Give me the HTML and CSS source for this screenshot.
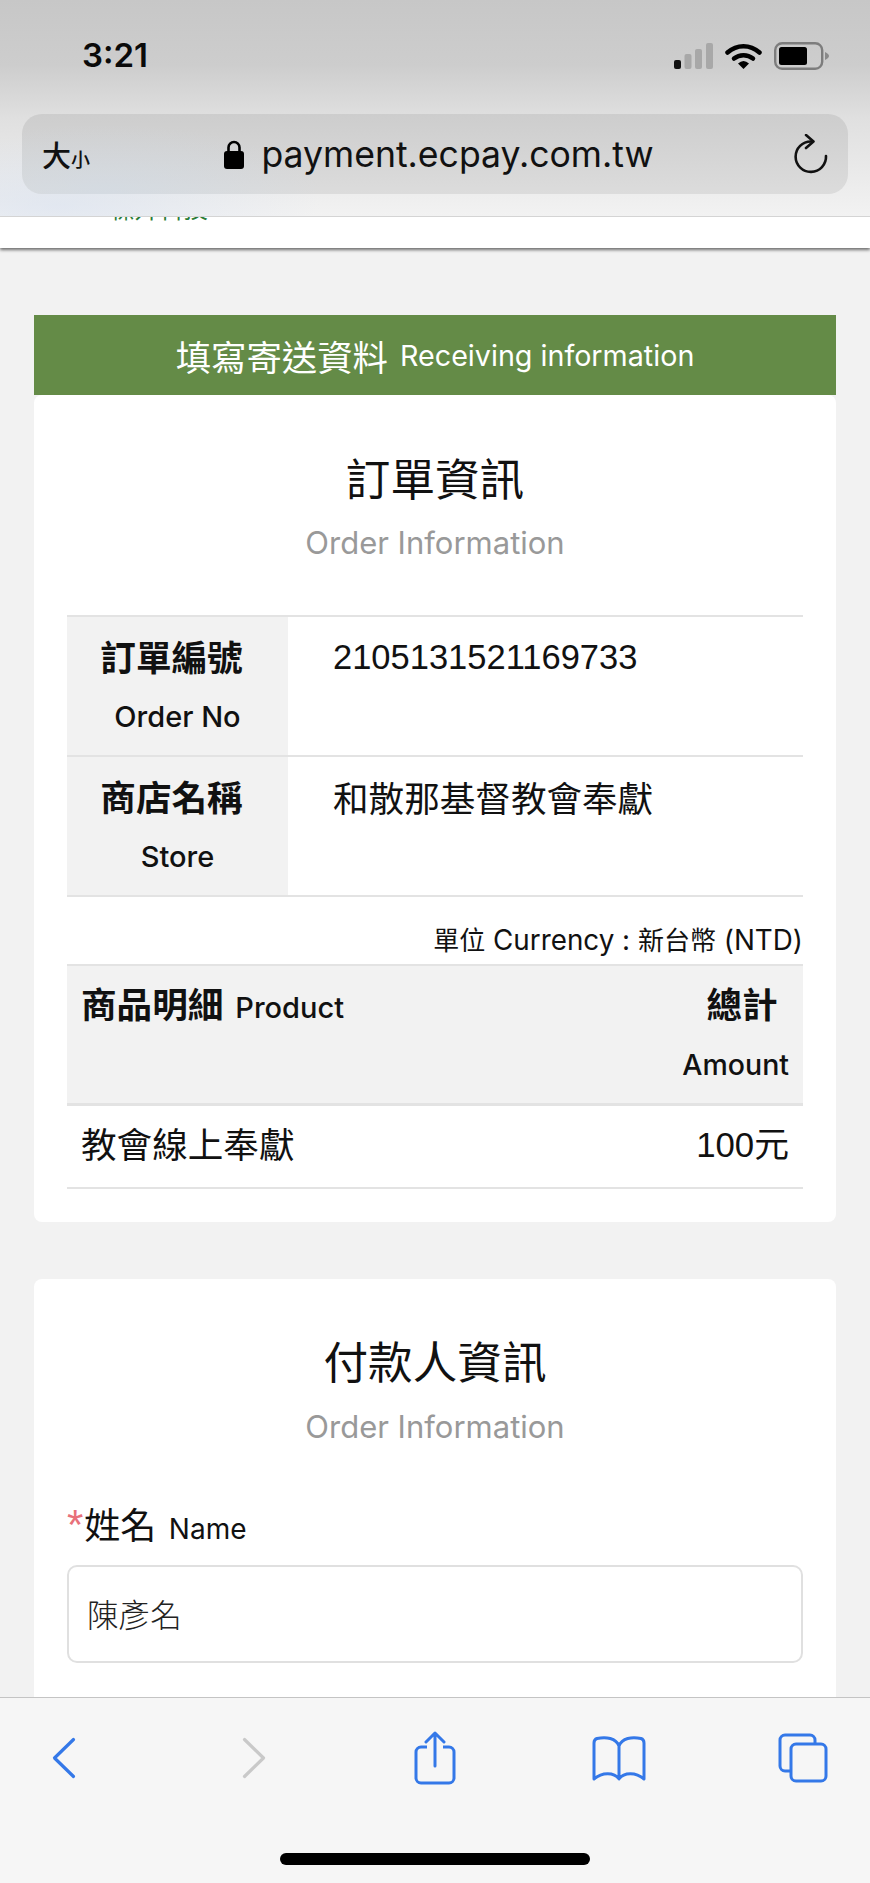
FILE: index.html
```html
<!DOCTYPE html>
<html lang="zh-Hant">
<head>
<meta charset="utf-8">
<title>填寫寄送資料</title>
<link rel="stylesheet" href="styles.css">
</head>
<body>
<div class="phone">
  <header class="chrome">
    <div class="status">
      <span class="time">3:21</span>
      <div class="status-icons">
        <svg class="signal" width="39" height="26" viewBox="0 0 39 26"><rect x="0" y="17" width="7" height="9" rx="2" fill="#111"/><rect x="10.500" y="11" width="7" height="15" rx="2" fill="#a8a8a8"/><rect x="21" y="6" width="7" height="20" rx="2" fill="#a8a8a8"/><rect x="32" y="0" width="7" height="26" rx="2" fill="#a8a8a8"/></svg>
        <svg class="wifi" width="37" height="26" viewBox="0 0 37 26"><path d="M2.500 9.500C12 1 25 1 34.500 9.500" fill="none" stroke="#000" stroke-width="4.500" stroke-linecap="round"/><path d="M9 15.500C14.500 11 22.500 11 28 15.500" fill="none" stroke="#000" stroke-width="4.500" stroke-linecap="round"/><path d="M13 20.500Q18.500 15.500 24 20.500L18.500 26Z" fill="#000"/></svg>
        <svg class="battery" width="56" height="28" viewBox="0 0 56 28"><rect x="1.200" y="1.200" width="47" height="25.600" rx="7" fill="none" stroke="#7d7d7d" stroke-width="2.400"/><rect x="5" y="5" width="28" height="18" rx="2.500" fill="#000"/><path d="M51 10Q55 12 55 14Q55 16 51 18Z" fill="#8a8a8a"/></svg>
      </div>
    </div>
    <div class="address">
      <span class="textsize"><span class="big">大</span><span class="small">小</span></span>
      <div class="url">
        <svg class="lock" width="20" height="29" viewBox="0 0 20 29"><rect x="0" y="11" width="20" height="18" rx="3" fill="#000"/><path d="M4.500 12V7.500a5.500 5.500 0 0 1 11 0V12" fill="none" stroke="#000" stroke-width="2.600"/></svg>
        <span class="host">payment.ecpay.com.tw</span>
      </div>
      <svg class="reload" width="34" height="40" viewBox="0 0 34 40"><path d="M17 7.500A15.200 15.200 0 1 0 32 22" fill="none" stroke="#111" stroke-width="2.600" stroke-linecap="round"/><path d="M12 1l7.500 6.500L12 14" fill="none" stroke="#111" stroke-width="2.600" stroke-linecap="round" stroke-linejoin="round"/></svg>
    </div>
  </header>

  <main class="viewport">
    <div class="sitebar"><span class="sitename">標升科技</span></div>
    <div class="content">
      <section class="card first">
        <h1 class="banner"><span class="banner-zh">填寫寄送資料</span> <span class="banner-en">Receiving information</span></h1>
        <div class="card-body">
          <div class="heading">
            <h2>訂單資訊</h2>
            <p>Order Information</p>
          </div>
          <div class="info">
            <div class="info-row">
              <div class="info-th"><b>訂單編號</b><span>Order No</span></div>
              <div class="info-td number">2105131521169733</div>
            </div>
            <div class="info-row">
              <div class="info-th"><b>商店名稱</b><span>Store</span></div>
              <div class="info-td">和散那基督教會奉獻</div>
            </div>
          </div>
          <div class="currency"><span class="cur-zh">單位</span> Currency : <span class="cur-zh">新台幣</span> (NTD)</div>
          <div class="items">
            <div class="items-head">
              <div class="product"><b>商品明細</b><span>Product</span></div>
              <div class="amount"><b>總計</b><span>Amount</span></div>
            </div>
            <div class="items-row">
              <span>教會線上奉獻</span>
              <span class="price">100元</span>
            </div>
          </div>
        </div>
      </section>

      <section class="card second">
        <div class="card-body">
          <div class="heading">
            <h2>付款人資訊</h2>
            <p>Order Information</p>
          </div>
          <label class="field-label"><span class="req">*</span><span class="label-zh">姓名</span> <span class="label-en">Name</span></label>
          <div class="input">陳彥名</div>
        </div>
      </section>
    </div>
  </main>

  <footer class="toolbar">
    <div class="tools">
      <svg class="t-back" width="24" height="42" viewBox="0 0 24 42"><path d="M21.500 2.500L2.500 21L21.500 39.500" fill="none" stroke="#3478e8" stroke-width="3.200" stroke-linecap="round" stroke-linejoin="round"/></svg>
      <svg class="t-forward" width="24" height="42" viewBox="0 0 24 42"><path d="M2.500 2.500L21.500 21L2.500 39.500" fill="none" stroke="#c9c9c9" stroke-width="3.200" stroke-linecap="round" stroke-linejoin="round"/></svg>
      <svg class="t-share" width="42" height="54" viewBox="0 0 42 54"><path d="M13 16H7a5 5 0 0 0-5 5v26a5 5 0 0 0 5 5h28a5 5 0 0 0 5-5V21a5 5 0 0 0-5-5h-6" fill="none" stroke="#3478e8" stroke-width="3"/><path d="M21 2V35M12 11L21 2L30 11" fill="none" stroke="#3478e8" stroke-width="3" stroke-linecap="round" stroke-linejoin="round"/></svg>
      <svg class="t-book" width="54" height="46" viewBox="0 0 54 46"><path d="M27 11C24 3 14 1.500 5 3.500Q2 4.500 2 8V44C10 37 22 37 27 44C32 37 44 37 52 44V8Q52 4.500 49 3.500C40 1.500 30 3 27 11V42" fill="none" stroke="#3478e8" stroke-width="3" stroke-linejoin="round"/></svg>
      <svg class="t-tabs" width="50" height="50" viewBox="0 0 50 50"><path d="M37 11V7a5 5 0 0 0-5-5H7a5 5 0 0 0-5 5v26a5 5 0 0 0 5 5h5" fill="none" stroke="#3478e8" stroke-width="3"/><rect x="13" y="11" width="35" height="37" rx="5" fill="none" stroke="#3478e8" stroke-width="3"/></svg>
    </div>
    <div class="home"></div>
  </footer>
</div>
</body>
</html>
```
FILE: styles.css
```css
* { box-sizing: border-box; }
html, body { margin: 0; padding: 0; }
body {
  font-family: "Liberation Sans", "Noto Sans CJK TC", sans-serif;
  color: #111;
  background: #f2f2f2;
}
.phone {
  width: 870px;
  height: 1883px;
  display: flex;
  flex-direction: column;
  overflow: hidden;
}
h1, h2, p { margin: 0; font-weight: normal; }

/* browser top */
.chrome {
  height: 217px;
  flex: none;
  padding: 0 22px;
  background:
    radial-gradient(ellipse 260px 70px at 60px 205px, rgba(214,224,240,.55), rgba(214,224,240,0)),
    linear-gradient(180deg, #c7c7c7 0%, #cdcdcd 30%, #e0e0e0 55%, #f2f2f2 100%);
  border-bottom: 1px solid #d4d4d4;
}
.status {
  height: 114px;
  display: flex;
  justify-content: space-between;
  align-items: flex-start;
  padding: 35px 18px 0 60px;
}
.time { font-size: 33px; line-height: 40px; font-weight: 600; color: #0a0a0a; font-family: "Inter", "Liberation Sans", sans-serif; }
.status-icons { display: flex; align-items: center; gap: 12px; margin-top: 7px; }
.address {
  height: 80px;
  border-radius: 20px;
  background:
    radial-gradient(ellipse 220px 70px at 80px 80px, rgba(205,218,232,.5), rgba(205,218,232,0)),
    linear-gradient(180deg, #cdcdcd, #dcdcdc);
  display: flex;
  align-items: center;
  padding: 0 20px;
}
.textsize { display: flex; align-items: baseline; width: 48px; color: #111; font-family: "Noto Sans CJK TC", sans-serif; font-weight: 500; }
.textsize .big { font-size: 29px; }
.textsize .small { font-size: 19px; }
.url { flex: 1; display: flex; align-items: center; justify-content: center; gap: 17px; padding-right: 6px; }
.host { font-size: 35.6px; color: #111; font-family: "Inter", "Liberation Sans", sans-serif; }

/* page */
.viewport { flex: 1; min-height: 0; overflow: hidden; background: #f2f2f2; }
.sitebar {
  height: 31px;
  background: #fff;
  box-shadow: 0 2px 3px rgba(0,0,0,.55);
  overflow: hidden;
  padding-left: 110px;
  position: relative;
}
.sitename { display: block; margin-top: -22px; font-size: 24.500px; line-height: 26px; color: #2a7d36; font-family: "Noto Sans CJK TC", sans-serif; }
.content { padding: 67px 34px 0; }
.card-body { background: #fff; border-radius: 8px; padding: 0 33px 33px; }
.card.second { margin-top: 57px; }
.card.second .card-body { padding-bottom: 100px; }
.banner {
  height: 80px;
  background: #648b47;
  color: #fff;
  display: flex;
  align-items: center;
  justify-content: center;
  gap: 12px;
}
.banner-zh { font-size: 35.4px; font-family: "Noto Sans CJK TC", sans-serif; }
.banner-en { font-size: 28.7px; font-family: "Inter", "Liberation Sans", sans-serif; }
.heading { text-align: center; padding-top: 52px; }
.card.second .heading { padding-top: 51px; }
.heading h2 { font-size: 44.600px; line-height: 60px; font-family: "Noto Sans CJK TC", sans-serif; color: #111; }
.heading p { font-size: 31px; line-height: 46px; color: #999; margin-top: 13px; font-family: "Inter", "Liberation Sans", sans-serif; }
.card.second .heading p { margin-top: 14px; }

.info { margin-top: 49px; border-top: 2px solid #e3e3e3; }
.info-row { display: flex; height: 140px; border-bottom: 2px solid #e3e3e3; }
.info-th {
  width: 221px;
  background: #f2f2f2;
  display: flex;
  flex-direction: column;
  align-items: center;
}
.info-th b { font-size: 35.6px; line-height: 48px; margin-top: 15px; padding-right: 12px; font-family: "Noto Sans CJK TC", sans-serif; }
.info-th span { font-size: 29px; line-height: 36px; margin-top: 19px; font-weight: 500; font-family: "Inter", "Liberation Sans", sans-serif; }
.info-td { padding: 16px 0 0 45px; line-height: 48px; font-size: 35.6px; font-family: "Noto Sans CJK TC", sans-serif; }
.info-td.number { font-size: 34.500px; font-family: "Liberation Sans", sans-serif; }

.currency { text-align: right; font-size: 27.800px; line-height: 36px; margin-top: 24px; color: #111; font-family: "Inter", "Liberation Sans", sans-serif; }
.cur-zh { font-size: 26px; font-family: "Noto Sans CJK TC", sans-serif; }
.items { margin-top: 6px; border-top: 2px solid #e3e3e3; }
.items-head {
  height: 140px;
  background: #f2f2f2;
  border-bottom: 3px solid #e3e3e3;
  display: flex;
  justify-content: space-between;
  padding: 13px 14px 0;
}
.product { display: flex; align-items: baseline; gap: 12px; }
.product b { font-size: 35.6px; line-height: 48px; font-family: "Noto Sans CJK TC", sans-serif; }
.product span { font-size: 29px; font-weight: 500; font-family: "Inter", "Liberation Sans", sans-serif; }
.amount { display: flex; flex-direction: column; align-items: center; }
.amount b { font-size: 35.6px; line-height: 48px; padding-left: 13px; font-family: "Noto Sans CJK TC", sans-serif; }
.amount span { font-size: 28.500px; line-height: 36px; margin-top: 20px; font-weight: 500; font-family: "Inter", "Liberation Sans", sans-serif; }
.items-row {
  height: 83px;
  border-bottom: 2px solid #e3e3e3;
  display: flex;
  justify-content: space-between;
  align-items: center;
  padding: 0 14px 9px;
  font-size: 35.6px;
  font-family: "Liberation Sans", "Noto Sans CJK TC", sans-serif;
}
.price { font-size: 34.800px; }

.field-label { display: block; margin-top: 45px; line-height: 56px; }
.req { color: #e8717a; font-size: 42px; font-family: "Liberation Sans", sans-serif; line-height: 40px; margin-right: 1px; }
.label-zh { font-size: 36px; font-family: "Noto Sans CJK TC", sans-serif; }
.label-en { font-size: 28px; font-family: "Inter", "Liberation Sans", sans-serif; padding-left: 8px; }
.input {
  margin-top: 3px;
  height: 98px;
  border: 2px solid #e0e0e0;
  border-radius: 10px;
  padding: 0 18px 2px;
  display: flex;
  align-items: center;
  font-size: 31.6px;
  font-weight: 300;
  color: #222;
  font-family: "Noto Sans CJK TC", sans-serif;
}

/* browser bottom */
.toolbar {
  height: 186px;
  flex: none;
  background: #f6f6f6;
  border-top: 1px solid #c4c4c4;
}
.tools {
  display: flex;
  align-items: center;
  height: 119px;
  padding-left: 52px;
}
.t-forward { margin-left: 166px; }
.t-share { margin-left: 148px; }
.t-book { margin-left: 136px; }
.t-tabs { margin-left: 132px; }
.home {
  width: 310px;
  height: 12px;
  background: #000;
  border-radius: 6px;
  margin: 36px auto 0;
}
```
